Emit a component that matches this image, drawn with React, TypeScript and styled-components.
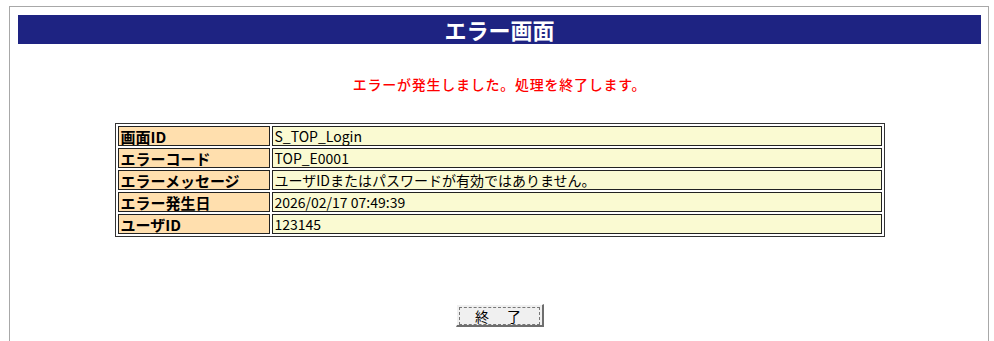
import React, { FC } from 'react';
import styled, { createGlobalStyle } from 'styled-components';

const GlobalStyle = createGlobalStyle`
    html, body {
        margin: 0;
        padding: 0;
        overflow: hidden;
        background: #ffffff;
    }
    body {
        padding: 6px 0 0 9px;
        font-family: "Noto Sans CJK JP", "Noto Sans", sans-serif;
        color: #000000;
    }
`;

const StyledFrame = styled.div`
    box-sizing: border-box;
    width: 980px;
    height: 335px;
    border: 1px solid #a8a8a8;
    border-bottom: none;
    padding: 8px 7px 0 8px;
    display: flex;
    flex-direction: column;
    align-items: center;
`;

const StyledTitleBar = styled.div`
    align-self: stretch;
    height: 29px;
    background: #1e2382;
    color: #ffffff;
    font-size: 22px;
    font-weight: bold;
    line-height: 29px;
    text-align: center;
`;

const StyledErrorMessage = styled.div`
    margin-top: 30px;
    height: 20px;
    line-height: 20px;
    font-size: 14px;
    font-weight: 500;
    letter-spacing: 0.75px;
    color: #ff0000;
`;

const StyledTable = styled.table`
    margin-top: 29px;
    width: 770px;
    border: 1px solid #333333;
    border-spacing: 2px;
    border-collapse: separate;
`;

const StyledCell = styled.td<{ $label?: boolean }>`
    box-sizing: border-box;
    height: 20px;
    padding: 0 2px;
    border: 1px solid #222222;
    background: ${(props) => (props.$label ? '#ffdfae' : '#fafad2')};
    width: ${(props) => (props.$label ? '152px' : 'auto')};
    font-size: ${(props) => (props.$label ? '15px' : '14px')};
    font-weight: ${(props) => (props.$label ? 'bold' : 'normal')};
    line-height: 17px;
    white-space: nowrap;
`;

const StyledButton = styled.button`
    margin-top: 67px;
    box-sizing: border-box;
    width: 88px;
    height: 23px;
    padding: 2px;
    background: #f0f0f0;
    border-style: solid;
    border-width: 1px 2px 2px 1px;
    border-color: #ffffff #6e6e6e #6e6e6e #ffffff;
    font-family: "Noto Sans CJK JP", sans-serif;
    font-size: 14px;
    cursor: pointer;
`;

const StyledFocusRing = styled.span`
    display: flex;
    align-items: center;
    justify-content: center;
    height: 100%;
    border: 1px dashed #777777;
    line-height: 15px;
    letter-spacing: 2px;
`;

type ErrorRow = {
    label: string;
    value: string;
};

const rows: ErrorRow[] = [
    { label: '画面ID', value: 'S_TOP_Login' },
    { label: 'エラーコード', value: 'TOP_E0001' },
    { label: 'エラーメッセージ', value: 'ユーザIDまたはパスワードが有効ではありません。' },
    { label: 'エラー発生日', value: '2026/02/17 07:49:39' },
    { label: 'ユーザID', value: '123145' },
];

const ErrorDetailTable: FC<{ rows: ErrorRow[] }> = (props) => (
    <StyledTable>
        <tbody>
            {props.rows.map((row) => (
                <tr key={row.label}>
                    <StyledCell $label>{row.label}</StyledCell>
                    <StyledCell>{row.value}</StyledCell>
                </tr>
            ))}
        </tbody>
    </StyledTable>
);

const App: FC = () => (
    <>
        <GlobalStyle />
        <StyledFrame>
            <StyledTitleBar>エラー画面</StyledTitleBar>
            <StyledErrorMessage>エラーが発生しました。処理を終了します。</StyledErrorMessage>
            <ErrorDetailTable rows={rows} />
            <StyledButton type="button">
                <StyledFocusRing>終　了</StyledFocusRing>
            </StyledButton>
        </StyledFrame>
    </>
);

export default App;
